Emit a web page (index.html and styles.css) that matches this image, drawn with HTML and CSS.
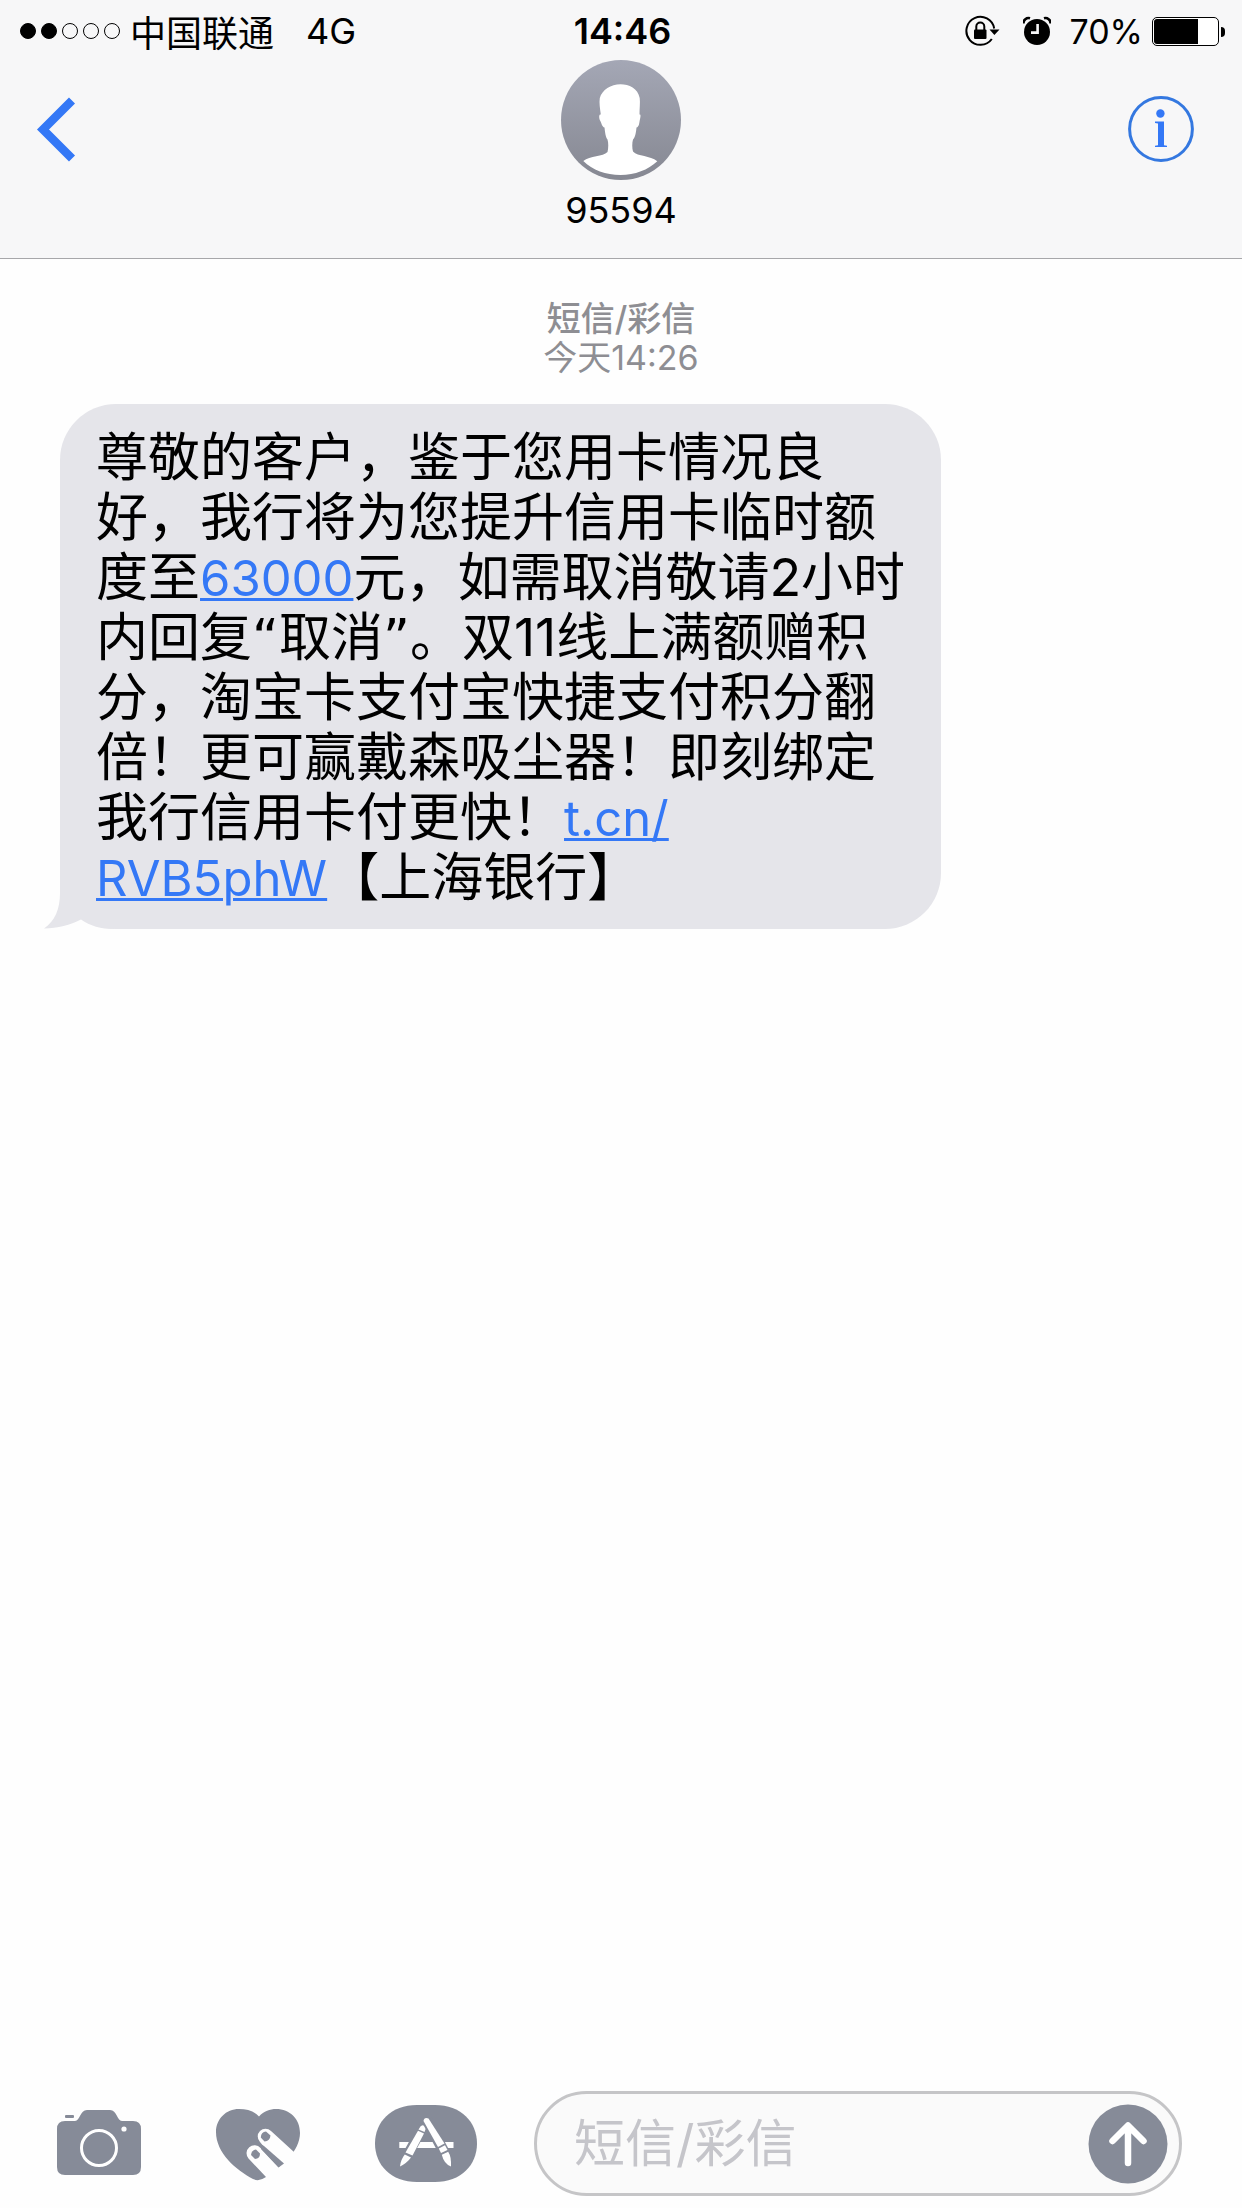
FILE: index.html
```html
<!DOCTYPE html>
<html lang="zh-CN">
<head>
  <meta charset="UTF-8" />
  <meta name="viewport" content="width=device-width, initial-scale=1" />
  <title>95594</title>
  <link rel="stylesheet" href="styles.css">
</head>
<body>
  <header class="top">
    <!-- 状态栏 -->
    <div class="status-bar">
      <div class="status-left">
        <div class="signal">
          <i class="dot on"></i><i class="dot on"></i><i class="dot"></i><i class="dot"></i><i class="dot"></i>
        </div>
        <span class="carrier">中国联通</span>
        <span>4G</span>
      </div>
      <span class="clock">14:46</span>
      <div class="status-right">
        <svg class="icon-lock" width="36" height="32" viewBox="0 0 36 32">
          <path d="M29.2 13.5A14 14 0 1 0 26.8 24" fill="none" stroke="#000" stroke-width="2"/>
          <path d="M24.5 14.6H34.5L29.4 20Z"/>
          <rect x="9" y="14.5" width="12.5" height="9.5" rx="1"/>
          <path d="M11.3 15V11.5a4 4 0 0 1 8 0V15" fill="none" stroke="#000" stroke-width="2"/>
        </svg>
        <svg class="icon-alarm" width="28" height="30" viewBox="0 0 28 30">
          <circle cx="14" cy="16" r="13"/>
          <path d="M0.5 7.5A5 5 0 0 1 7 2.3" fill="none" stroke="#000" stroke-width="2.6"/>
          <path d="M27.5 7.5A5 5 0 0 0 21 2.3" fill="none" stroke="#000" stroke-width="2.6"/>
          <path d="M14.6 8V16.6H8" fill="none" stroke="#f7f7f8" stroke-width="2.6"/>
        </svg>
        <span>70%</span>
        <div class="battery"><div class="battery-level" style="width: 70%"></div></div>
      </div>
    </div>

    <!-- 导航栏 -->
    <div class="nav-bar">
      <button class="back-btn" aria-label="返回">
        <svg width="40" height="66" viewBox="0 0 40 66">
          <path d="M36 4.5L7 33.5L36 62.5" fill="none" stroke="#3478f6" stroke-width="8.5"/>
        </svg>
      </button>
      <div class="contact">
        <svg width="120" height="120" viewBox="0 0 120 120">
          <defs>
            <linearGradient id="avatarBg" x1="0" y1="0" x2="0" y2="1">
              <stop offset="0" stop-color="#a4a7b5"/>
              <stop offset="1" stop-color="#868892"/>
            </linearGradient>
          </defs>
          <circle cx="60" cy="60" r="60" fill="url(#avatarBg)"/>
          <path fill="#fff" d="M59.5 24.3C68 24.3 77 28.5 78.7 38C79.3 43 78.5 48 78.5 54.5C80 54 79.6 57 78.8 60C78.2 63.5 78 67 75.5 67.5C75 72 74.5 77 72 79.5C71 83 71 88 72 91.5C77 97 89 95 96.3 101.3C87 110 74 115 59.5 115C45 115 31.5 110 22.3 101C29 95.5 42 97 46.5 92C47.5 88 47.5 83 46.5 79.5C44.5 77 44 72 43.5 67.5C41 67 40.8 63.5 38.8 60C37.8 57 38 54 39.8 54.5C39 48 38 43 38.8 38C41 30 50 24.3 59.5 24.3Z"/>
        </svg>
        <h1>95594</h1>
      </div>
      <button class="info-btn" aria-label="详细信息">
        <svg width="66" height="66" viewBox="0 0 66 66">
          <circle cx="33" cy="33" r="31.4" fill="none" stroke="#3478e0" stroke-width="3"/>
          <circle cx="32.4" cy="17.5" r="4.2" fill="#3478f6"/>
          <path fill="#3478f6" d="M27 25.5H36V49.2L39 49.8V51H27V49.8L30 49.2V27.5L27 27Z"/>
        </svg>
      </button>
    </div>
  </header>

  <!-- 聊天记录 -->
  <main class="chat">
    <p class="chat-time"><strong>短信/彩信</strong><br>今天14:26</p>
    <div class="bubble">
      尊敬的客户，鉴于您用卡情况良好，我行将为您提升信用卡临时额度至<a href="tel:63000">63000</a>元，如需取消敬请2小时内回复<span class="quote">“</span>取消<span class="quote">”</span>。双11线上满额赠积分，淘宝卡支付宝快捷支付积分翻倍！更可赢戴森吸尘器！即刻绑定我行信用卡付更快！<a href="http://t.cn/RVB5phW">t.cn/<br>RVB5phW</a>【上海银行】
      <svg class="bubble-tail" width="70" height="60" viewBox="0 0 70 60">
        <path fill="#e5e5ea" d="M16 0V24C16 40 11 52 0 59.5C14 59.5 26 56 37 50.5C46 57 57 60 70 60V0Z"/>
      </svg>
    </div>
  </main>

  <!-- 输入区域 -->
  <footer class="composer">
    <button aria-label="相机">
      <svg width="84" height="78" viewBox="0 0 84 78">
        <path fill="#868b98" d="M8 16H18C23 16 23 5 30 5H53C60 5 60 16 65 16H76Q84 16 84 24V62Q84 70 76 70H8Q0 70 0 62V24Q0 16 8 16Z"/>
        <rect x="8" y="10" width="9" height="3" rx="1" fill="#868b98"/>
        <circle cx="42" cy="43" r="17.5" fill="none" stroke="#fff" stroke-width="3"/>
        <circle cx="67" cy="24" r="2.6" fill="#fff"/>
      </svg>
    </button>
    <button aria-label="数码触控">
      <svg width="84" height="78" viewBox="0 0 84 78">
        <path fill="#868b98" d="M43 11.5C48 6 54 4 60 4C74 4 84 14 84 28C84 46 66 61 50 72Q43 77 37 74C20 65 0 48 0 27C0 14 10 4 23 4C31 4 38 6 43 11.5Z"/>
        <path fill="#fefefe" d="M55 26L78 47L92 60L80 76L64 62L44 37A7.5 7.5 0 0 1 55 26Z"/>
        <path fill="#fefefe" d="M44.5 43L63 62.5L68 58L86 66L70 78H56L50 72L32.5 53.5A7.2 7.2 0 0 1 44.5 43Z"/>
        <path fill="#868b98" d="M45.5 39.5L48 41L68 58.5L62.5 62.5L45 44Z"/>
        <path fill="#868b98" d="M50 26.5L54.5 30.5Q54 36 48.5 36.5L44.8 32.5Q45 27 50 26.5Z"/>
        <path fill="#868b98" d="M40 44.5L44 48.5Q44 53.5 39 54L35 50Q35.5 45 40 44.5Z"/>
      </svg>
    </button>
    <button aria-label="App Store">
      <svg width="102" height="78" viewBox="0 0 102 78">
        <path fill="#868b98" d="M42 0H60C86 0 102 17 102 38.5S86 77 60 77H42C16 77 0 60 0 38.5S16 0 42 0Z"/>
        <path d="M24.3 40H78.5" stroke="#fff" stroke-width="6"/>
        <path d="M49 20L27 60" stroke="#868b98" stroke-width="10"/>
        <g fill="#fff">
          <path d="M45.5 21.5Q49 18.5 51 23L49.5 27L43.5 24.5Z"/>
          <path d="M43 25.8L49 28.5L37.5 50.5L30.5 47.5Z"/>
          <path d="M29.8 49.5L36 52.5Q32 58 25 61.5Q25.5 55 29.8 49.5Z"/>
        </g>
        <path d="M52 15L76 60" stroke="#868b98" stroke-width="11"/>
        <g fill="#fff">
          <path d="M48.5 16Q49 12 53.5 13.5L69.5 38.5L63 42Z"/>
          <path d="M63.8 43.5L70 40.3L72.5 45L66 48Z"/>
          <path d="M66.8 49.8L73.2 46.8Q76.5 52 76 61.5Q69 59 66.8 49.8Z"/>
        </g>
      </svg>
    </button>
    <form class="field" onsubmit="return false">
      <input type="text" placeholder="短信/彩信" aria-label="短信/彩信" />
      <button class="send-btn" aria-label="发送">
        <svg width="80" height="80" viewBox="0 0 80 80">
          <circle cx="40" cy="40" r="39.5" fill="#868b98"/>
          <path d="M40 59V22M24.5 37L40 21.5L55.5 37" fill="none" stroke="#fff" stroke-width="6.5" stroke-linecap="round" stroke-linejoin="round"/>
        </svg>
      </button>
    </form>
  </footer>
</body>
</html>
```

FILE: styles.css
```css
* {
  box-sizing: border-box;
  margin: 0;
  padding: 0;
}
body {
  font-family: Inter, "Noto Sans CJK SC", sans-serif;
  font-size: 36px;
  color: #000;
  background-color: #fefefe;
  display: flex;
  flex-direction: column;
  min-height: 100vh;
}
button {
  border: none;
  background: none;
  cursor: pointer;
}
svg {
  display: block;
}

/* 顶部 */
.top {
  background-color: #f7f7f8;
  border-bottom: 1px solid #a7a7aa;
}
.status-bar {
  display: grid;
  grid-template-columns: 1fr auto 1fr;
  align-items: center;
  height: 60px;
  padding: 2px 17px 0 20px;
}
.status-left,
.status-right {
  display: flex;
  align-items: center;
}
.status-right {
  justify-content: flex-end;
  font-size: 34px;
}
.signal {
  display: flex;
  gap: 5px;
  margin-right: 10px;
}
.dot {
  width: 16px;
  height: 16px;
  border: 1px solid #000;
  border-radius: 50%;
}
.dot.on {
  background-color: #000;
}
.carrier {
  margin-right: 32px;
}
.clock {
  font-weight: 600;
}
.icon-lock {
  margin-right: 22px;
}
.icon-alarm {
  margin-right: 18px;
}

/* 电池 */
.battery {
  position: relative;
  width: 67px;
  height: 29px;
  margin-left: 9px;
  margin-right: 6px;
  padding: 1px;
  border: 1px solid #000;
  border-radius: 5px;
  background-color: #fff;
}
.battery::after {
  content: "";
  position: absolute;
  right: -7px;
  top: 9px;
  width: 4px;
  height: 10px;
  border-radius: 0 4px 4px 0;
  background-color: #000;
}
.battery-level {
  height: 100%;
  border-radius: 3px 0 0 3px;
  background-color: #000;
}

/* 导航 */
.nav-bar {
  display: grid;
  grid-template-columns: 1fr auto 1fr;
  align-items: start;
  height: 198px;
  padding: 0 36px;
}
.back-btn,
.info-btn {
  margin-top: 36px;
}
.back-btn {
  justify-self: start;
}
.info-btn {
  justify-self: end;
  margin-right: 12px;
}
.contact {
  display: flex;
  flex-direction: column;
  align-items: center;
}
.contact h1 {
  font-size: 36px;
  font-weight: 400;
  line-height: 60px;
}

/* 聊天区域 */
.chat {
  flex: 1;
  padding: 40px 60px;
}
.chat-time {
  margin-bottom: 27px;
  font-size: 34px;
  line-height: 39px;
  text-align: center;
  color: #8e8e93;
}
.chat-time strong {
  font-weight: 500;
}
.bubble {
  position: relative;
  isolation: isolate;
  width: 881px;
  max-width: 100%;
  padding: 24px 28px 21px 36px;
  border-radius: 56px;
  font-size: 52px;
  line-height: 60px;
  background-color: #e5e5ea;
}
.bubble a {
  font-size: 49px;
  line-height: 1;
  color: #3478f6;
  text-decoration-thickness: 3px;
}
.quote {
  font-family: "DejaVu Sans", sans-serif;
  line-height: 1;
}
/* 气泡左下角的小尾巴，垫在文字下面 */
.bubble-tail {
  position: absolute;
  z-index: -1;
  left: -16px;
  bottom: 0;
}

/* 输入区域 */
.composer {
  display: flex;
  align-items: center;
  gap: 75px;
  padding: 12px 60px 12px 57px;
}
.field {
  flex: 1;
  display: flex;
  align-items: center;
  min-width: 0;
  height: 105px;
  margin-left: -18px;
  padding: 0 11px 0 37px;
  border: 3px solid #c5c5c7;
  border-radius: 53px;
  background-color: #fafafa;
}
.field input {
  flex: 1;
  min-width: 0;
  border: none;
  outline: none;
  background: none;
  font-family: inherit;
  font-size: 51px;
}
.field input::placeholder {
  color: #c5c5ca;
}
```
